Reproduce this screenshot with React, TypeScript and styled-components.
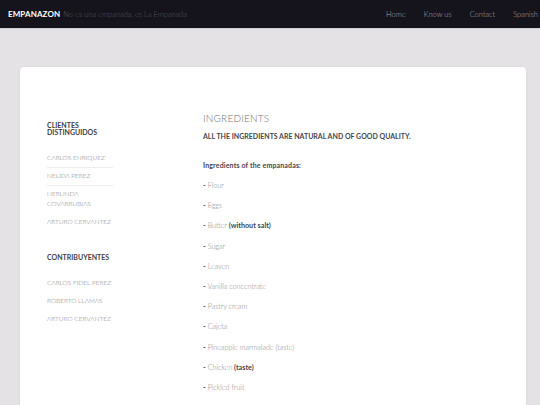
import React from "react";
import styled, { createGlobalStyle } from "styled-components";

const GlobalStyle = createGlobalStyle`
    html, body {
        margin: 0;
        padding: 0;
        background: #e4e2e5;
        font-family: "Lato", "Open Sans", sans-serif;
    }
    * {
        box-sizing: border-box;
    }
`;

interface IIngredient {
    name: string;
    note?: string;
}

const CLIENTS = ["CARLOS ENRIQUEZ", "NELIDA PEREZ", "HERLINDA COVARRUBIAS", "ARTURO CERVANTEZ"];
const CONTRIBUTORS = ["CARLOS FIDEL PEREZ", "ROBERTO LLAMAS", "ARTURO CERVANTEZ"];

const INGREDIENTS: IIngredient[] = [
    { name: "Flour" },
    { name: "Eggs" },
    { name: "Butter", note: "(without salt)" },
    { name: "Sugar" },
    { name: "Leaven" },
    { name: "Vanilla concentrate" },
    { name: "Pastry cream" },
    { name: "Cajeta" },
    { name: "Pineapple marmalade (taste)" },
    { name: "Chicken", note: "(taste)" },
    { name: "Pickled fruit" },
];

const NAV_LINKS = ["Home", "Know us", "Contact", "Spanish"];

const App = () => {
    return (
        <>
            <GlobalStyle />
            <Navbar>
                <Brand>
                    <BrandName>EMPANAZON</BrandName>
                    <Tagline>No es una empanada, es La Empanada</Tagline>
                </Brand>
                <NavLinks>
                    {NAV_LINKS.map((link) => (
                        <NavLink key={link}>{link}</NavLink>
                    ))}
                </NavLinks>
            </Navbar>

            <Page>
                <Card>
                    <Sidebar>
                        <SideTitle>CLIENTES DISTINGUIDOS</SideTitle>
                        <SideList>
                            {CLIENTS.map((name, i) => (
                                <SideItem key={name} $divider={i < 2}>
                                    {name}
                                </SideItem>
                            ))}
                        </SideList>

                        <SideTitle>CONTRIBUYENTES</SideTitle>
                        <SideList>
                            {CONTRIBUTORS.map((name) => (
                                <SideItem key={name}>{name}</SideItem>
                            ))}
                        </SideList>
                    </Sidebar>

                    <Main>
                        <Heading>INGREDIENTS</Heading>
                        <Lead>ALL THE INGREDIENTS ARE NATURAL AND OF GOOD QUALITY.</Lead>
                        <SubHeading>Ingredients of the empanadas:</SubHeading>
                        <IngredientList>
                            {INGREDIENTS.map((item) => (
                                <Ingredient key={item.name}>
                                    <Dash>-</Dash> {item.name}
                                    {item.note && <Note> {item.note}</Note>}
                                </Ingredient>
                            ))}
                        </IngredientList>
                    </Main>
                </Card>
            </Page>
        </>
    );
};

export default App;

const Navbar = styled.header`
    height: 29px;
    background: #15141c;
    border-bottom: 1px solid #cfcdd3;
    display: flex;
    align-items: center;
    justify-content: space-between;
    padding: 0 2px 0 8px;
`;

const Brand = styled.div`
    display: flex;
    align-items: baseline;
    gap: 3px;
`;

const BrandName = styled.span`
    color: #ffffff;
    font-size: 8px;
    font-weight: 700;
    letter-spacing: 0.1px;
`;

const Tagline = styled.span`
    color: #56555c;
    font-size: 7.5px;
    font-weight: 300;
`;

const NavLinks = styled.nav`
    display: flex;
    gap: 18px;
`;

const NavLink = styled.a`
    color: #a9a8ae;
    font-size: 7.5px;
    font-weight: 300;
    cursor: pointer;
`;

const Page = styled.main`
    padding: 38px 14px 0 20px;
`;

const Card = styled.section`
    background: #ffffff;
    border-radius: 4px;
    box-shadow: 0 0 3px rgba(0, 0, 0, 0.06);
    min-height: 340px;
    padding: 46px 27px 0;
    display: flex;
    gap: 90px;
`;

const Sidebar = styled.aside`
    width: 66px;
    flex-shrink: 0;
    padding-top: 9px;
`;

const SideTitle = styled.h3`
    margin: 0 0 17px;
    font-size: 7px;
    line-height: 7px;
    font-weight: 700;
    color: #3f3e44;
    text-transform: uppercase;
`;

const SideList = styled.ul`
    list-style: none;
    margin: 0 0 22px;
    padding: 0;
    display: flex;
    flex-direction: column;
    gap: 3px;
`;

const SideItem = styled.li<{ $divider?: boolean }>`
    font-size: 6.5px;
    line-height: 10px;
    font-weight: 300;
    color: #7e7d83;
    padding-bottom: 4px;
    border-bottom: 1px solid ${({ $divider }) => ($divider ? "#ececee" : "transparent")};
`;

const Main = styled.div`
    flex: 1;
`;

const Heading = styled.h1`
    margin: 0 0 8px;
    font-size: 10px;
    line-height: 11px;
    font-weight: 300;
    color: #6f6e74;
    letter-spacing: 0.2px;
`;

const Lead = styled.p`
    margin: 0 0 20px;
    font-size: 7px;
    line-height: 9px;
    font-weight: 700;
    color: #46454b;
`;

const SubHeading = styled.p`
    margin: 0 0 6px;
    font-size: 7px;
    line-height: 9px;
    font-weight: 700;
    color: #46454b;
    letter-spacing: 0.15px;
`;

const IngredientList = styled.ul`
    list-style: none;
    margin: 0;
    padding: 0;
    display: flex;
    flex-direction: column;
`;

const Ingredient = styled.li`
    font-size: 7.2px;
    line-height: 20.2px;
    font-weight: 300;
    color: #89888e;
`;

const Dash = styled.span`
    color: #3f3e44;
    font-weight: 700;
`;

const Note = styled.span`
    color: #46454b;
    font-weight: 700;
`;
